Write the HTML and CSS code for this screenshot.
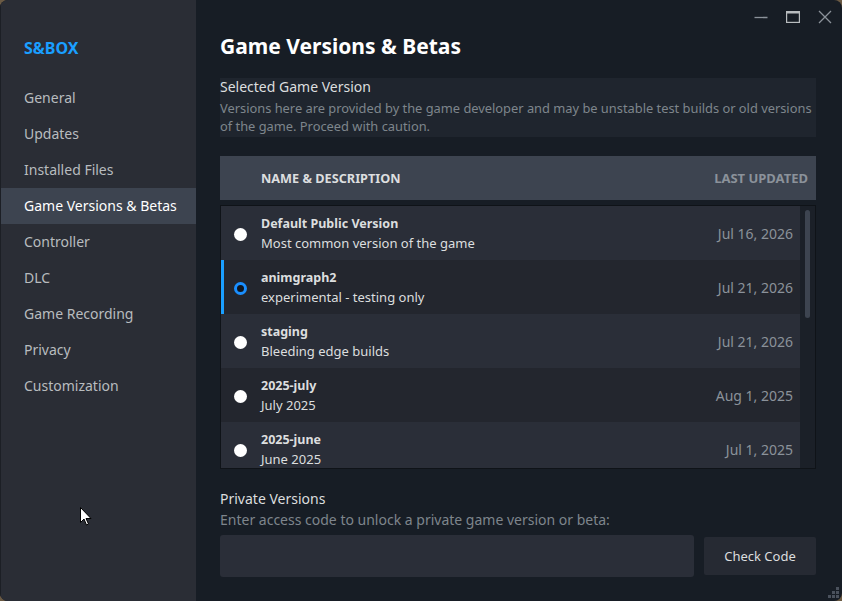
FILE: index.html
```html
<!DOCTYPE html>
<html lang="en">
<head>
    <meta charset="UTF-8">
    <title>Game Versions &amp; Betas</title>
    <link rel="stylesheet" href="styles.css">
</head>
<body>
    <div class="window">
        <aside class="sidebar">
            <div class="app-name">S&amp;BOX</div>
            <nav class="nav">
                <a class="nav-item">General</a>
                <a class="nav-item">Updates</a>
                <a class="nav-item">Installed Files</a>
                <a class="nav-item active">Game Versions &amp; Betas</a>
                <a class="nav-item">Controller</a>
                <a class="nav-item">DLC</a>
                <a class="nav-item">Game Recording</a>
                <a class="nav-item">Privacy</a>
                <a class="nav-item">Customization</a>
            </nav>
        </aside>

        <main class="content">
            <div class="titlebar">
                <button class="win-btn" aria-label="Minimize">
                    <svg width="14" height="14" viewBox="0 0 14 14"><path d="M0.5 7.5h13" stroke="#8b929a" stroke-width="1.3"/></svg>
                </button>
                <button class="win-btn" aria-label="Maximize">
                    <svg width="14" height="14" viewBox="0 0 14 14"><rect x="0.6" y="1.6" width="12.8" height="10.8" fill="none" stroke="#b8bcbf" stroke-width="1.2"/><path d="M0.6 2.6h12.8" stroke="#b8bcbf" stroke-width="2"/></svg>
                </button>
                <button class="win-btn" aria-label="Close">
                    <svg width="14" height="14" viewBox="0 0 14 14"><path d="M1 1l12 12M13 1l-12 12" stroke="#8b929a" stroke-width="1.3"/></svg>
                </button>
            </div>

            <h1 class="page-title">Game Versions &amp; Betas</h1>

            <section class="info-box">
                <h2 class="section-title">Selected Game Version</h2>
                <p class="section-desc">Versions here are provided by the game developer and may be unstable test builds or old versions of the game. Proceed with caution.</p>
            </section>

            <div class="table-head">
                <span>Name &amp; Description</span>
                <span class="muted">Last Updated</span>
            </div>

            <div class="list-wrap">
                <ul class="version-list">
                    <li class="version-row">
                        <span class="radio"></span>
                        <div class="version-text">
                            <div class="version-name">Default Public Version</div>
                            <div class="version-desc">Most common version of the game</div>
                        </div>
                        <span class="version-date">Jul 16, 2026</span>
                    </li>
                    <li class="version-row selected">
                        <span class="radio"></span>
                        <div class="version-text">
                            <div class="version-name">animgraph2</div>
                            <div class="version-desc">experimental - testing only</div>
                        </div>
                        <span class="version-date">Jul 21, 2026</span>
                    </li>
                    <li class="version-row">
                        <span class="radio"></span>
                        <div class="version-text">
                            <div class="version-name">staging</div>
                            <div class="version-desc">Bleeding edge builds</div>
                        </div>
                        <span class="version-date">Jul 21, 2026</span>
                    </li>
                    <li class="version-row">
                        <span class="radio"></span>
                        <div class="version-text">
                            <div class="version-name">2025-july</div>
                            <div class="version-desc">July 2025</div>
                        </div>
                        <span class="version-date">Aug 1, 2025</span>
                    </li>
                    <li class="version-row">
                        <span class="radio"></span>
                        <div class="version-text">
                            <div class="version-name">2025-june</div>
                            <div class="version-desc">June 2025</div>
                        </div>
                        <span class="version-date">Jul 1, 2025</span>
                    </li>
                </ul>
                <div class="scrollbar"><div class="scroll-thumb"></div></div>
            </div>

            <section class="private">
                <h2 class="section-title">Private Versions</h2>
                <p class="section-desc">Enter access code to unlock a private game version or beta:</p>
                <div class="code-row">
                    <input type="text" class="code-input">
                    <button class="check-btn">Check Code</button>
                </div>
            </section>
        </main>

        <div class="grip">
            <span></span><span></span><span></span><span></span><span></span><span></span>
        </div>

        <svg class="cursor" width="12" height="19" viewBox="0 0 12 19">
            <path d="M0.5 0.5v15l3.5-3.5 2.5 6 2-1-2.5-5.5h5z" fill="#fff" stroke="#000" stroke-width="1"/>
        </svg>
    </div>
</body>
</html>
```

FILE: styles.css
```css
* {
    margin: 0;
    padding: 0;
    box-sizing: border-box;
}

body {
    font-family: 'Noto Sans', 'Open Sans', sans-serif;
    background: #6b5a44;
    width: 842px;
    height: 601px;
    overflow: hidden;
}

.window {
    position: relative;
    display: flex;
    width: 842px;
    height: 601px;
    background: #171d25;
    border-radius: 8px;
    overflow: hidden;
}

/* sidebar */
.sidebar {
    width: 196px;
    flex-shrink: 0;
    background: #2a2d35;
    padding-top: 36px;
    border-left: 1px solid #1c1f25;
}

.app-name {
    color: #1a9fff;
    font-weight: 700;
    font-size: 16px;
    padding-left: 23px;
    height: 24px;
    line-height: 24px;
    margin-bottom: 20px;
}

.nav {
    display: flex;
    flex-direction: column;
}

.nav-item {
    display: block;
    height: 36px;
    line-height: 36px;
    padding-left: 23px;
    font-size: 14px;
    color: #b8bcbf;
}

.nav-item.active {
    background: #3d4450;
    color: #fff;
}

/* main */
.content {
    flex: 1;
    padding: 0 26px 0 24px;
    display: flex;
    flex-direction: column;
}

.titlebar {
    display: flex;
    justify-content: flex-end;
    gap: 17px;
    height: 32px;
    margin-right: -16px;
    padding-top: 9px;
}

.win-btn {
    background: none;
    border: none;
    width: 15px;
    height: 15px;
    display: flex;
    align-items: center;
    justify-content: center;
}

.page-title {
    color: #fff;
    font-size: 21px;
    font-weight: 700;
    line-height: 28px;
    margin-bottom: 18px;
}

.info-box {
    background: #1f252e;
    padding: 0 0 2px 0;
    margin-bottom: 19px;
}

.section-title {
    font-size: 14px;
    font-weight: 400;
    color: #dcdedf;
    line-height: 18px;
    margin-bottom: 3px;
}

.section-desc {
    font-size: 12.85px;
    color: #7e858c;
    line-height: 18px;
}

.table-head {
    display: flex;
    justify-content: space-between;
    align-items: center;
    height: 44px;
    background: #3d4450;
    padding: 0 8px 0 41px;
    font-size: 12.7px;
    font-weight: 700;
    text-transform: uppercase;
    color: #dcdedf;
    margin-bottom: 5px;
}

.table-head .muted {
    color: #8b929a;
    font-size: 13px;
}

.list-wrap {
    display: flex;
    height: 264px;
    background: #1a1f26;
    border: 1px solid #0f1318;
    overflow: hidden;
}

.version-list {
    list-style: none;
    flex: 1;
}

.version-row {
    display: flex;
    align-items: center;
    height: 54px;
    background: #2a2e38;
    padding: 0 7px 0 12px;
    border-left: 3px solid transparent;
}

.version-row:nth-child(even) {
    background: #23262e;
}

.version-row.selected {
    border-left-color: #1a9fff;
}

.radio {
    width: 13px;
    height: 13px;
    border-radius: 50%;
    background: #fff;
    margin: 2px 14px 0 -2px;
    flex-shrink: 0;
}

.selected .radio {
    background: #10161f;
    border: 3px solid #1a8fff;
}

.version-text {
    flex: 1;
}

.version-name {
    font-size: 12.5px;
    font-weight: 700;
    color: #dcdedf;
    line-height: 18px;
    margin-bottom: 1px;
}

.version-desc {
    font-size: 13px;
    color: #dcdedf;
    line-height: 18px;
}

.version-date {
    font-size: 14px;
    color: #8b929a;
}

.scrollbar {
    width: 15px;
    background: #1b2028;
    padding: 4px 5px;
}

.scroll-thumb {
    height: 108px;
    background: #3d4450;
    border-radius: 3px;
}

.private {
    margin-top: 21px;
}

.private .section-desc {
    font-size: 14px;
}

.code-row {
    display: flex;
    align-items: center;
    gap: 10px;
    margin-top: 6px;
}

.code-input {
    flex: 1;
    height: 42px;
    background: #2a2e38;
    border: none;
    border-radius: 3px;
}

.check-btn {
    width: 112px;
    height: 38px;
    background: #262a33;
    border: none;
    border-radius: 2px;
    color: #dcdedf;
    font-family: inherit;
    font-size: 13px;
}

.grip {
    position: absolute;
    right: 3px;
    bottom: 3px;
    width: 12px;
    height: 12px;
}

.grip span {
    position: absolute;
    width: 3px;
    height: 3px;
    background: #4a515c;
}

.grip span:nth-child(1) { right: 0; bottom: 8px; }
.grip span:nth-child(2) { right: 0; bottom: 4px; }
.grip span:nth-child(3) { right: 4px; bottom: 4px; }
.grip span:nth-child(4) { right: 0; bottom: 0; }
.grip span:nth-child(5) { right: 4px; bottom: 0; }
.grip span:nth-child(6) { right: 8px; bottom: 0; }

.cursor {
    position: absolute;
    left: 80px;
    top: 507px;
}
```
